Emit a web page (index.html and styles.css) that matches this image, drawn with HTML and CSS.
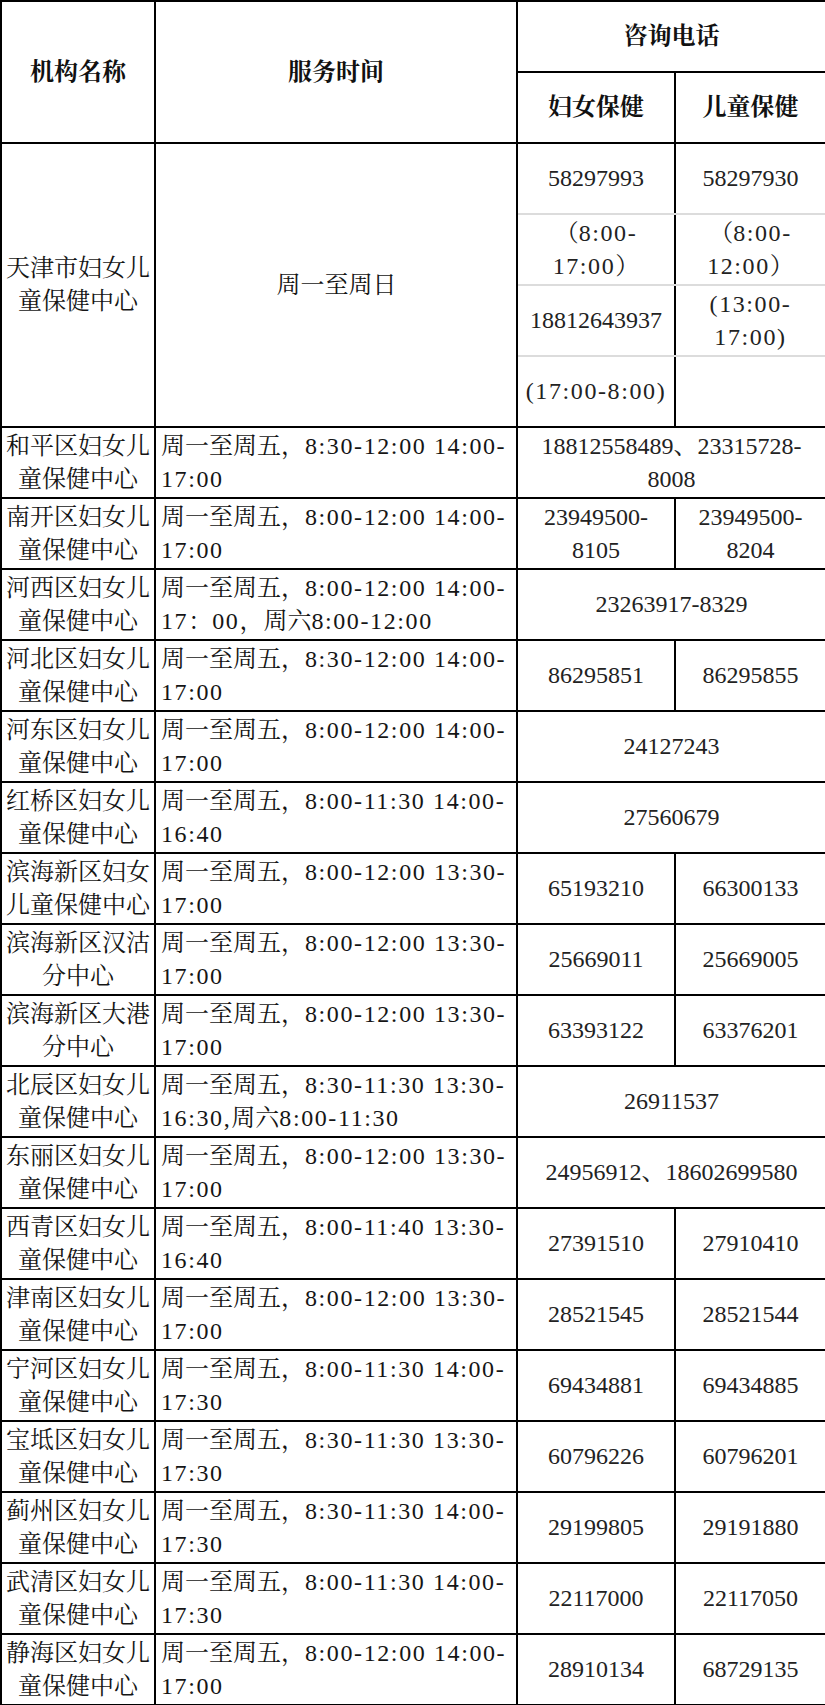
FILE: index.html
```html
<!DOCTYPE html>
<html lang="zh-CN">
<head>
<meta charset="utf-8">
<title>妇女儿童保健中心咨询电话</title>
<link rel="stylesheet" href="styles.css">
</head>
<body>
<table class="tbl">
  <colgroup>
    <col class="c-name">
    <col class="c-time">
    <col class="c-women">
    <col class="c-child">
  </colgroup>
  <thead>
    <tr class="hrow">
      <th rowspan="2">机构名称</th>
      <th rowspan="2">服务时间</th>
      <th colspan="2">咨询电话</th>
    </tr>
    <tr class="hrow">
      <th>妇女保健</th>
      <th>儿童保健</th>
    </tr>
  </thead>
  <tbody>
    <tr class="sub">
      <td rowspan="4" class="name">天津市妇女儿<br>童保健中心</td>
      <td rowspan="4" class="time center">周一至周日</td>
      <td class="ph s-first">58297993</td>
      <td class="ph s-first">58297930</td>
    </tr>
    <tr class="sub">
      <td class="ph s-mid">（<span class="n">8:00-</span><br><span class="n">17:00</span>）</td>
      <td class="ph s-mid">（<span class="n">8:00-</span><br><span class="n">12:00</span>）</td>
    </tr>
    <tr class="sub">
      <td class="ph s-mid">18812643937</td>
      <td class="ph s-mid"><span class="n">(13:00-</span><br><span class="n">17:00)</span></td>
    </tr>
    <tr class="sub">
      <td class="ph s-last"><span class="n">(17:00-8:00)</span></td>
      <td class="ph s-last"></td>
    </tr>
    <tr class="row">
      <td class="name">和平区妇女儿<br>童保健中心</td>
      <td class="time">周一至周五，<span class="n">8:30-12:00 14:00-</span><br><span class="n">17:00</span></td>
      <td class="ph" colspan="2">18812558489、23315728-<br>8008</td>
    </tr>
    <tr class="row">
      <td class="name">南开区妇女儿<br>童保健中心</td>
      <td class="time">周一至周五，<span class="n">8:00-12:00 14:00-</span><br><span class="n">17:00</span></td>
      <td class="ph">23949500-<br>8105</td>
      <td class="ph">23949500-<br>8204</td>
    </tr>
    <tr class="row">
      <td class="name">河西区妇女儿<br>童保健中心</td>
      <td class="time">周一至周五，<span class="n">8:00-12:00 14:00-</span><br><span class="n">17</span>：<span class="n">00</span>，周六<span class="n">8:00-12:00</span></td>
      <td class="ph" colspan="2">23263917-8329</td>
    </tr>
    <tr class="row">
      <td class="name">河北区妇女儿<br>童保健中心</td>
      <td class="time">周一至周五，<span class="n">8:30-12:00 14:00-</span><br><span class="n">17:00</span></td>
      <td class="ph">86295851</td>
      <td class="ph">86295855</td>
    </tr>
    <tr class="row">
      <td class="name">河东区妇女儿<br>童保健中心</td>
      <td class="time">周一至周五，<span class="n">8:00-12:00 14:00-</span><br><span class="n">17:00</span></td>
      <td class="ph" colspan="2">24127243</td>
    </tr>
    <tr class="row">
      <td class="name">红桥区妇女儿<br>童保健中心</td>
      <td class="time">周一至周五，<span class="n">8:00-11:30 14:00-</span><br><span class="n">16:40</span></td>
      <td class="ph" colspan="2">27560679</td>
    </tr>
    <tr class="row">
      <td class="name">滨海新区妇女<br>儿童保健中心</td>
      <td class="time">周一至周五，<span class="n">8:00-12:00 13:30-</span><br><span class="n">17:00</span></td>
      <td class="ph">65193210</td>
      <td class="ph">66300133</td>
    </tr>
    <tr class="row">
      <td class="name">滨海新区汉沽<br>分中心</td>
      <td class="time">周一至周五，<span class="n">8:00-12:00 13:30-</span><br><span class="n">17:00</span></td>
      <td class="ph">25669011</td>
      <td class="ph">25669005</td>
    </tr>
    <tr class="row">
      <td class="name">滨海新区大港<br>分中心</td>
      <td class="time">周一至周五，<span class="n">8:00-12:00 13:30-</span><br><span class="n">17:00</span></td>
      <td class="ph">63393122</td>
      <td class="ph">63376201</td>
    </tr>
    <tr class="row">
      <td class="name">北辰区妇女儿<br>童保健中心</td>
      <td class="time">周一至周五，<span class="n">8:30-11:30 13:30-</span><br><span class="n">16:30,</span>周六<span class="n">8:00-11:30</span></td>
      <td class="ph" colspan="2">26911537</td>
    </tr>
    <tr class="row">
      <td class="name">东丽区妇女儿<br>童保健中心</td>
      <td class="time">周一至周五，<span class="n">8:00-12:00 13:30-</span><br><span class="n">17:00</span></td>
      <td class="ph" colspan="2">24956912、18602699580</td>
    </tr>
    <tr class="row">
      <td class="name">西青区妇女儿<br>童保健中心</td>
      <td class="time">周一至周五，<span class="n">8:00-11:40 13:30-</span><br><span class="n">16:40</span></td>
      <td class="ph">27391510</td>
      <td class="ph">27910410</td>
    </tr>
    <tr class="row">
      <td class="name">津南区妇女儿<br>童保健中心</td>
      <td class="time">周一至周五，<span class="n">8:00-12:00 13:30-</span><br><span class="n">17:00</span></td>
      <td class="ph">28521545</td>
      <td class="ph">28521544</td>
    </tr>
    <tr class="row">
      <td class="name">宁河区妇女儿<br>童保健中心</td>
      <td class="time">周一至周五，<span class="n">8:00-11:30 14:00-</span><br><span class="n">17:30</span></td>
      <td class="ph">69434881</td>
      <td class="ph">69434885</td>
    </tr>
    <tr class="row">
      <td class="name">宝坻区妇女儿<br>童保健中心</td>
      <td class="time">周一至周五，<span class="n">8:30-11:30 13:30-</span><br><span class="n">17:30</span></td>
      <td class="ph">60796226</td>
      <td class="ph">60796201</td>
    </tr>
    <tr class="row">
      <td class="name">蓟州区妇女儿<br>童保健中心</td>
      <td class="time">周一至周五，<span class="n">8:30-11:30 14:00-</span><br><span class="n">17:30</span></td>
      <td class="ph">29199805</td>
      <td class="ph">29191880</td>
    </tr>
    <tr class="row">
      <td class="name">武清区妇女儿<br>童保健中心</td>
      <td class="time">周一至周五，<span class="n">8:00-11:30 14:00-</span><br><span class="n">17:30</span></td>
      <td class="ph">22117000</td>
      <td class="ph">22117050</td>
    </tr>
    <tr class="row">
      <td class="name">静海区妇女儿<br>童保健中心</td>
      <td class="time">周一至周五，<span class="n">8:00-12:00 14:00-</span><br><span class="n">17:00</span></td>
      <td class="ph">28910134</td>
      <td class="ph">68729135</td>
    </tr>
  </tbody>
</table>
</body>
</html>
```
FILE: styles.css
```css
html, body {
  margin: 0;
  padding: 0;
  background: #ffffff;
}

body {
  font-family: "Liberation Serif", "Noto Serif CJK SC", "Noto Sans CJK SC", serif;
  font-size: 24px;
  line-height: 33px;
  color: #151515;
}

.tbl {
  width: 825px;
  border-collapse: collapse;
  table-layout: fixed;
}

.c-name { width: 154px; }
.c-time { width: 362px; }
.c-women { width: 158px; }
.c-child { width: 151px; }

.tbl th,
.tbl td {
  border: 2px solid #000000;
  padding: 0 4px;
  vertical-align: middle;
  text-align: center;
  white-space: nowrap;
  overflow: hidden;
}

.tbl th {
  font-weight: bold;
  color: #111111;
}

.hrow { height: 71px; }
.sub { height: 71px; }
.row { height: 71px; }

.n {
  letter-spacing: 1.6px;
}

.tbl td.name {
  padding: 0;
  text-align: center;
}

.tbl td.time {
  text-align: left;
  padding-left: 5px;
}

.tbl td.time.center {
  text-align: center;
}

.tbl td.ph {
  color: #222222;
}

.tbl td.s-first {
  border-bottom: 2px solid #dcdcdc;
}

.tbl td.s-mid {
  border-top: 2px solid #dcdcdc;
  border-bottom: 2px solid #dcdcdc;
}

.tbl td.s-last {
  border-top: 2px solid #dcdcdc;
}
```
